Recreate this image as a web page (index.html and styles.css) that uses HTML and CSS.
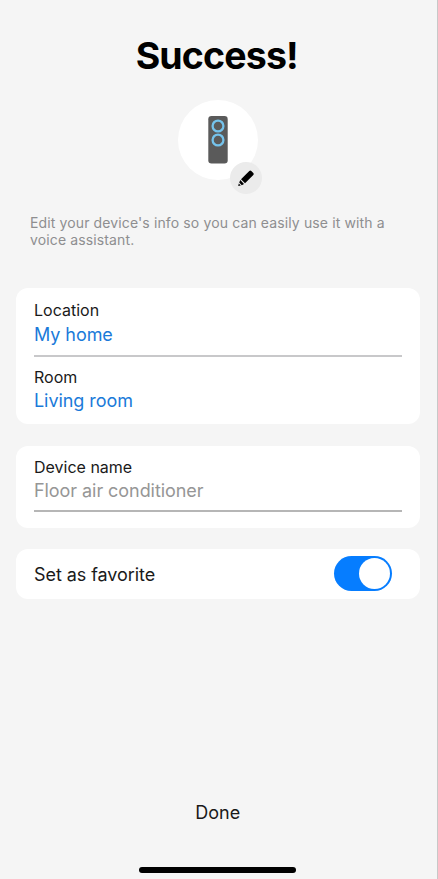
FILE: index.html
```html
<!DOCTYPE html>
<html lang="en">
<head>
<meta charset="utf-8">
<title>Success</title>
<link rel="stylesheet" href="styles.css">
</head>
<body>
<main class="screen">
  <h1 class="title">Success!</h1>
  <div class="avatar">
    <svg class="device" width="20" height="48" viewBox="0 0 20 48"><rect x=".3" width="19.400" height="47.500" rx="3.200" fill="#5a5a5a"/><g fill="none" stroke="#75c3ec" stroke-width="2.300"><circle cx="10" cy="10" r="5.400"/><circle cx="10" cy="24" r="5.400"/></g></svg>
    <span class="edit"><svg width="18" height="18" viewBox="0 0 18 18"><path d="M4 10.200L12.300 2q1-1 2 0l2 2q1 1 0 2L8 14.200zM3.300 11.100l3.700 3.800-2.200 1.300-2.600-2.700zM1.800 14.500l2 2L1.200 17z"/></svg></span>
  </div>
  <p class="hint"><span>Edit your device's info so you can easily use it with a</span><br><span>voice assistant.</span></p>
  <section class="card places">
    <div class="field"><span class="label">Location</span><a class="value">My home</a></div>
    <div class="field"><span class="label">Room</span><a class="value">Living room</a></div>
  </section>
  <section class="card name">
    <div class="field"><span class="label">Device name</span><span class="value muted">Floor air conditioner</span></div>
  </section>
  <section class="card favorite"><span class="favorite-label">Set as favorite</span><span class="switch"></span></section>
  <button class="done">Done</button>
  <div class="home"></div>
</main>
</body>
</html>
```
FILE: styles.css
```css
* { box-sizing: border-box; }
body { margin: 0; background: #f5f5f5; font-family: Inter, "Liberation Sans", sans-serif; color: #1a1a1a; }
.screen { height: 879px; padding: 34px 17.5px 0 16px; display: flex; flex-direction: column; border-right: 1px solid #c8c8c8; }
.title { margin: 0; height: 44px; line-height: 44px; padding-right: 2px; font-size: 37.5px; font-weight: 700; text-align: center; color: #000; letter-spacing: -0.85px; }
.avatar { position: relative; width: 80px; height: 80px; margin: 22px auto 0; border-radius: 50%; background: #fff; display: flex; align-items: center; justify-content: center; }
.edit { position: absolute; left: 52px; top: 62px; width: 32px; height: 32px; border-radius: 50%; background: #ebebeb; display: flex; align-items: center; justify-content: center; }
.hint { margin: 34px 14px 0; height: 74px; font-size: 14px; line-height: 17px; letter-spacing: 0.125px; color: #8e8e90; white-space: nowrap; }
.card { background: #fff; border-radius: 12px; padding: 0 17.5px 0 18px; }
.places { height: 136px; }
.field { height: 69px; padding-top: 12px; border-bottom: 2px solid #c8c8ca; display: flex; flex-direction: column; }
.places .field + .field { border: 0; padding-top: 10px; }
.label { font-size: 16px; line-height: 21px; }
.value { font-size: 18px; line-height: 26px; letter-spacing: -0.06px; color: #1a7ad9; }
.places .field:first-child .value { padding-top: 1px; line-height: 25px; }
.value.muted { color: #969696; }
.name { height: 82px; margin-top: 22px; }
.name .field { height: 66px; padding-top: 11px; border-bottom: 2px solid #b6b6b6; }
.favorite { height: 50px; margin-top: 20.500px; padding-right: 28px; display: flex; align-items: center; justify-content: space-between; font-size: 18px; letter-spacing: -0.06px; }
.favorite-label { padding-top: 1px; }
.switch { width: 57.5px; height: 35px; border-radius: 18px; background: #067dff; padding: 2px; display: flex; justify-content: flex-end; }
.switch::after { content: ""; width: 31px; height: 31px; border-radius: 50%; background: #fff; }
.done { margin: 201px auto 0; height: 26px; padding: 0; border: 0; background: none; font: 18px/26px Inter, sans-serif; color: #1a1a1a; }
.home { width: 157px; height: 6px; margin: 41px auto 0; border-radius: 3px; background: #000; }
```
